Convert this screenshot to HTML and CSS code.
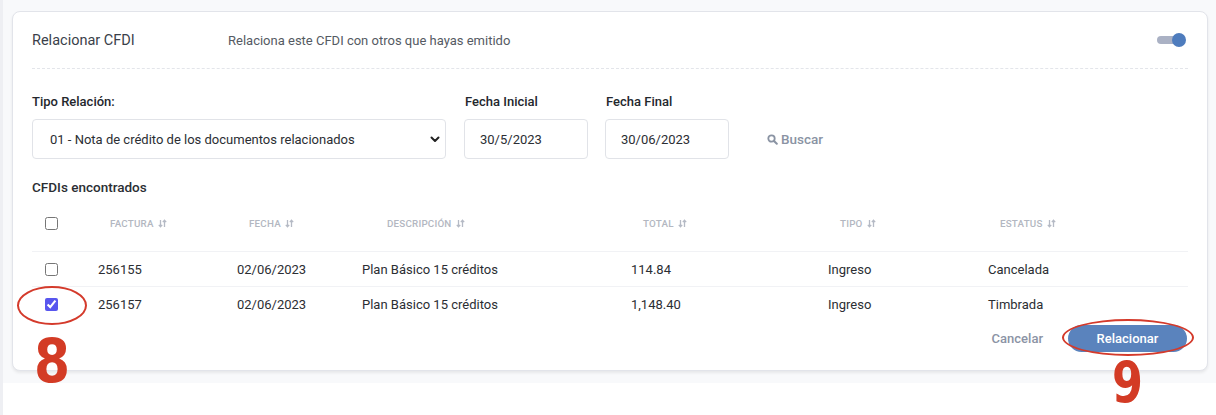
FILE: index.html
```html
<!DOCTYPE html>
<html lang="es">
<head>
<meta charset="utf-8">
<title>Relacionar CFDI</title>
<link rel="stylesheet" href="styles.css">
</head>
<body>
<div class="page">
  <section class="card">
    <header class="card-head">
      <h2 class="card-title">Relacionar CFDI</h2>
      <p class="card-desc">Relaciona este CFDI con otros que hayas emitido</p>
      <span class="toggle"><span class="toggle-track"></span><span class="toggle-knob"></span></span>
    </header>

    <div class="filters">
      <div class="field field-select">
        <label class="field-label">Tipo Relación:</label>
        <div class="select">
          <span>01 - Nota de crédito de los documentos relacionados</span>
          <svg class="chev" width="10" height="7" viewBox="0 0 10 7"><path d="M1.5 1.5 L5 5 L8.5 1.5" fill="none" stroke="#222" stroke-width="2" stroke-linecap="round" stroke-linejoin="round"/></svg>
        </div>
      </div>
      <div class="field field-date">
        <label class="field-label">Fecha Inicial</label>
        <div class="input">30/5/2023</div>
      </div>
      <div class="field field-date">
        <label class="field-label">Fecha Final</label>
        <div class="input">30/06/2023</div>
      </div>
      <button class="search">
        <svg width="11" height="11" viewBox="0 0 11 11"><circle cx="4.5" cy="4.5" r="3.2" fill="none" stroke="#8a93a3" stroke-width="1.8"/><path d="M7 7 L9.8 9.8" stroke="#8a93a3" stroke-width="2" stroke-linecap="round"/></svg>
        Buscar
      </button>
    </div>

    <h3 class="found">CFDIs encontrados</h3>

    <div class="table">
      <div class="row row-head">
        <div class="cell cell-check"><input type="checkbox"></div>
        <div class="cell th">FACTURA <svg class="sort" width="9" height="9" viewBox="0 0 9 9"><path d="M2.5 1 V7.5 M0.8 5.8 L2.5 7.8 L4.2 5.8 M6.5 8 V1.5 M4.8 3.2 L6.5 1.2 L8.2 3.2" fill="none" stroke="#b5bac5" stroke-width="1.3"/></svg></div>
        <div class="cell th">FECHA <svg class="sort" width="9" height="9" viewBox="0 0 9 9"><path d="M2.5 1 V7.5 M0.8 5.8 L2.5 7.8 L4.2 5.8 M6.5 8 V1.5 M4.8 3.2 L6.5 1.2 L8.2 3.2" fill="none" stroke="#b5bac5" stroke-width="1.3"/></svg></div>
        <div class="cell th th-wide">DESCRIPCIÓN <svg class="sort" width="9" height="9" viewBox="0 0 9 9"><path d="M2.5 1 V7.5 M0.8 5.8 L2.5 7.8 L4.2 5.8 M6.5 8 V1.5 M4.8 3.2 L6.5 1.2 L8.2 3.2" fill="none" stroke="#b5bac5" stroke-width="1.3"/></svg></div>
        <div class="cell th">TOTAL <svg class="sort" width="9" height="9" viewBox="0 0 9 9"><path d="M2.5 1 V7.5 M0.8 5.8 L2.5 7.8 L4.2 5.8 M6.5 8 V1.5 M4.8 3.2 L6.5 1.2 L8.2 3.2" fill="none" stroke="#b5bac5" stroke-width="1.3"/></svg></div>
        <div class="cell th">TIPO <svg class="sort" width="9" height="9" viewBox="0 0 9 9"><path d="M2.5 1 V7.5 M0.8 5.8 L2.5 7.8 L4.2 5.8 M6.5 8 V1.5 M4.8 3.2 L6.5 1.2 L8.2 3.2" fill="none" stroke="#b5bac5" stroke-width="1.3"/></svg></div>
        <div class="cell th">ESTATUS <svg class="sort" width="9" height="9" viewBox="0 0 9 9"><path d="M2.5 1 V7.5 M0.8 5.8 L2.5 7.8 L4.2 5.8 M6.5 8 V1.5 M4.8 3.2 L6.5 1.2 L8.2 3.2" fill="none" stroke="#b5bac5" stroke-width="1.3"/></svg></div>
      </div>
      <div class="row row-body">
        <div class="cell cell-check"><input type="checkbox"></div>
        <div class="cell">256155</div>
        <div class="cell">02/06/2023</div>
        <div class="cell">Plan Básico 15 créditos</div>
        <div class="cell">114.84</div>
        <div class="cell">Ingreso</div>
        <div class="cell">Cancelada</div>
      </div>
      <div class="row row-body row-last">
        <div class="cell cell-check">
          <input type="checkbox" checked>
          <span class="ring ring-check"></span>
          <span class="mark mark-8">8</span>
        </div>
        <div class="cell">256157</div>
        <div class="cell">02/06/2023</div>
        <div class="cell">Plan Básico 15 créditos</div>
        <div class="cell">1,148.40</div>
        <div class="cell">Ingreso</div>
        <div class="cell">Timbrada</div>
      </div>
    </div>

    <div class="actions">
      <button class="btn-cancel">Cancelar</button>
      <div class="btn-wrap">
        <button class="btn-primary">Relacionar</button>
        <span class="ring ring-btn"></span>
        <span class="mark mark-9">9</span>
      </div>
    </div>
  </section>
</div>
</body>
</html>
```

FILE: styles.css
```css
* { box-sizing: border-box; }
html, body { margin: 0; padding: 0; }
body {
  background: #ffffff;
  font-family: Roboto, "Liberation Sans", Arial, sans-serif;
  color: #333;
  border-left: 3px solid #eeeff3;
  min-height: 415px;
}
.page {
  background: #f8f9fb;
  height: 383px;
  padding: 11px 8px 0 9px;
}
.card {
  background: #fff;
  border: 1px solid #e2e4ea;
  border-radius: 8px;
  box-shadow: 0 2px 3px rgba(0,0,0,0.07);
  padding: 0 19px 18px 19px;
  height: 360px;
}
.card-head {
  display: flex;
  align-items: center;
  height: 57px;
  border-bottom: 1px dashed #e3e5ea;
}
.card-title {
  margin: 0;
  width: 196px;
  font-size: 14.5px;
  font-weight: 400;
  color: #3a3f4a;
}
.card-desc {
  margin: 0;
  font-size: 13px;
  color: #555a63;
  flex: 1;
}
.toggle {
  position: relative;
  width: 29px;
  height: 14px;
  margin-right: 2px;
  display: inline-block;
}
.toggle-track {
  position: absolute;
  left: 0; top: 3px;
  width: 24px; height: 8px;
  border-radius: 4px;
  background: #aab1c4;
}
.toggle-knob {
  position: absolute;
  right: 0; top: 0;
  width: 14px; height: 14px;
  border-radius: 50%;
  background: #4e7cbd;
}
.filters {
  display: flex;
  align-items: flex-end;
  padding-top: 25px;
}
.field { display: flex; flex-direction: column; }
.field-label {
  font-size: 13px;
  font-weight: 500;
  color: #24272d;
  line-height: 16px;
  margin-bottom: 9px;
}
.field-select { width: 414px; margin-right: 18px; }
.field-date { width: 124px; margin-right: 17px; }
.field-date .field-label { padding-left: 1px; }
.select, .input {
  height: 40px;
  border: 1px solid #e1e3e8;
  border-radius: 4px;
  display: flex;
  align-items: center;
  font-size: 13px;
  color: #2b2e33;
}
.select { padding: 0 0 0 17px; justify-content: space-between; }
.select .chev { margin-right: 5px; }
.input { padding-left: 15px; }
.search {
  margin-left: 21px;
  height: 40px;
  border: 0;
  background: transparent;
  font-family: inherit;
  font-size: 13.5px;
  font-weight: 500;
  color: #8a93a3;
  display: flex;
  align-items: center;
  gap: 3px;
  padding: 0;
}
.found {
  margin: 20px 0 0;
  font-size: 13.5px;
  font-weight: 500;
  line-height: 16px;
  color: #2b2e33;
}
.table { display: flex; flex-direction: column; }
.row {
  display: grid;
  grid-template-columns: 66px 139px 125px 269px 197px 160px 200px;
  align-items: center;
}
.row-head { height: 57px; border-bottom: 1px solid #f1f2f5; }
.row-body { height: 35px; border-bottom: 1px solid #f1f2f5; font-size: 13px; color: #2b2e33; }
.row-last { border-bottom: 0; height: 34px; }
.cell { display: flex; align-items: center; }
.cell-check { padding-left: 13px; position: relative; height: 100%; }
.cell-check input {
  margin: 0;
  width: 13px; height: 13px;
  accent-color: #5856ee;
}
.th {
  padding-left: 12px;
  font-size: 9.8px;
  font-weight: 500;
  color: #b3b7c1;
  letter-spacing: 0.2px;
}
.th-wide { padding-left: 25px; }
.sort { margin-left: 4px; }
.actions {
  display: flex;
  justify-content: flex-end;
  align-items: center;
  margin-top: 4px;
}
.btn-cancel {
  border: 0; background: transparent;
  font-family: inherit; font-size: 13px; font-weight: 500;
  color: #8b93a5;
  padding: 0;
  margin-right: 25px;
}
.btn-wrap { position: relative; }
.btn-primary {
  display: block;
  width: 119px; height: 27px;
  border: 0;
  border-radius: 14px;
  background: #5a83bd;
  color: #fff;
  font-family: inherit;
  font-size: 13px;
  font-weight: 500;
  margin-right: 1px;
}
.ring {
  position: absolute;
  border: 2.5px solid #d43a2b;
  border-radius: 50%;
  pointer-events: none;
}
.ring-check { left: -15px; top: -1px; width: 70px; height: 39px; }
.ring-btn { left: -6px; top: -6px; width: 132px; height: 37px; }
.mark {
  position: absolute;
  font-family: "DejaVu Sans", sans-serif;
  font-weight: 700;
  color: #d33b25;
  line-height: 1;
}
.mark-8 { left: 2px; top: 43px; font-size: 61px; transform: scaleX(0.85); transform-origin: left top; }
.mark-9 { left: 44px; top: 30px; font-size: 57px; transform: scaleX(0.78); transform-origin: left top; }
```
